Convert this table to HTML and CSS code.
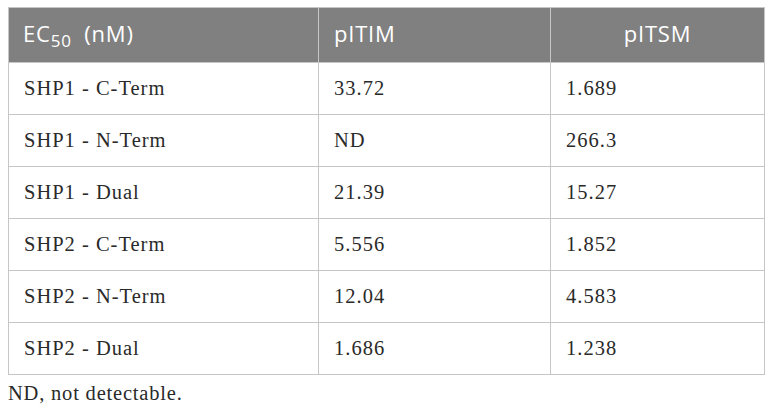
FILE: index.html
```html
<!DOCTYPE html>
<html>
<head>
<meta charset="utf-8">
<link rel="stylesheet" href="styles.css">
</head>
<body>
<table class="data">
  <colgroup>
    <col class="c1"><col class="c2"><col class="c3">
  </colgroup>
  <thead>
    <tr class="head">
      <th class="left">EC<sub>50</sub> (nM)</th>
      <th class="left">pITIM</th>
      <th class="center">pITSM</th>
    </tr>
  </thead>
  <tbody>
    <tr><td>SHP1 - C-Term</td><td>33.72</td><td>1.689</td></tr>
    <tr><td>SHP1 - N-Term</td><td>ND</td><td>266.3</td></tr>
    <tr><td>SHP1 - Dual</td><td>21.39</td><td>15.27</td></tr>
    <tr><td>SHP2 - C-Term</td><td>5.556</td><td>1.852</td></tr>
    <tr><td>SHP2 - N-Term</td><td>12.04</td><td>4.583</td></tr>
    <tr><td>SHP2 - Dual</td><td>1.686</td><td>1.238</td></tr>
  </tbody>
</table>
<p class="note">ND, not detectable.</p>
</body>
</html>
```
FILE: styles.css
```css
html, body {
  margin: 0;
  background: #ffffff;
}
body {
  padding: 7px 8px 0 8px;
  font-family: "Liberation Serif", "Times New Roman", serif;
  color: #2a2a2a;
}
.data {
  border-collapse: collapse;
  table-layout: fixed;
  width: 756px;
}
.c1 { width: 310px; }
.c2 { width: 232px; }
.c3 { width: 214px; }
.data th, .data td {
  border: 1px solid #c6c6c6;
  padding: 0 15px;
}
.head th {
  height: 55px;
  background: #808080;
  color: #ffffff;
  font-family: "Open Sans", "Liberation Sans", sans-serif;
  font-weight: 400;
  font-size: 22px;
  letter-spacing: 0.8px;
  vertical-align: middle;
  padding-bottom: 4px;
  box-sizing: border-box;
}
.head th.left { text-align: left; }
.head th:first-child { padding-left: 14px; }
.head th.center { text-align: center; }
.head sub {
  font-size: 17px;
  vertical-align: -5px;
  line-height: 0;
  margin-right: 6px;
}
.data td {
  height: 51px;
  font-size: 20.5px;
  letter-spacing: 1px;
  vertical-align: middle;
}
.note {
  margin: 7px 0 0 0;
  font-size: 20.5px;
  letter-spacing: 0.8px;
}
```
